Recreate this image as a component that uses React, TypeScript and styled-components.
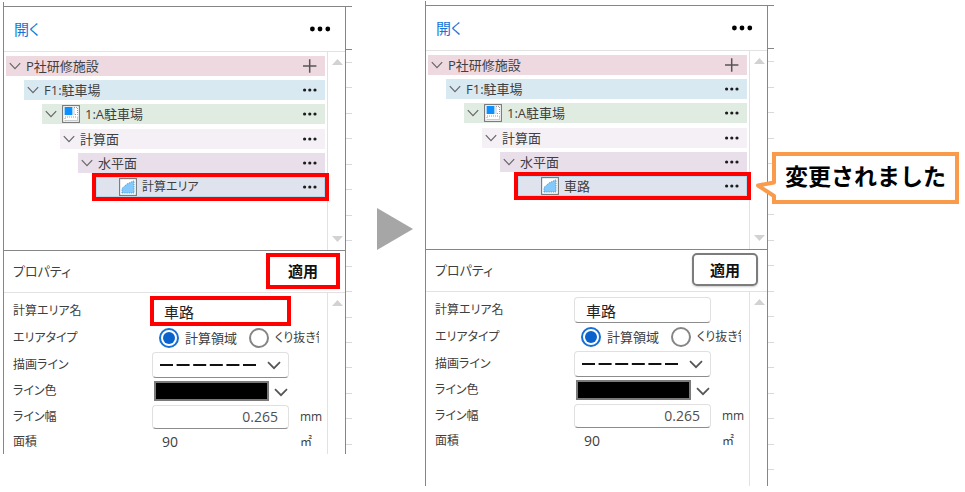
import React, { useId } from "react";
import styled, { createGlobalStyle, css } from "styled-components";

const line = "#868686";
const faint = "#e2e2e2";
const red = "#ff0000";
const orange = "#f99b4b";

const GlobalStyle = createGlobalStyle`
  *, *::before, *::after { box-sizing: border-box; }
  body {
    margin: 0;
    background: #fff;
    color: #404040;
    font: 13px/20px "Open Sans", "Noto Sans CJK JP", sans-serif;
    font-feature-settings: "palt";
  }
  button, input, select { font: inherit; font-feature-settings: inherit; color: inherit; }
  button { padding: 0; border: 0; background: none; cursor: pointer; }
  svg { display: block; flex: none; }
`;

const Page = styled.main`
  display: grid;
  grid-template-columns: minmax(0, 349fr) minmax(0, 73fr) minmax(0, 349fr) minmax(0, 188fr);
  align-items: start;
  padding: 1px 3px 4px;
`;

const Panel = styled.section<{ $low?: boolean; $tall?: boolean }>`
  display: flex;
  margin-top: ${(p) => (p.$low ? 1 : 0)}px;
  padding-top: 4px;
  border-left: 1px solid ${line};
  min-height: ${(p) => (p.$tall ? 485 : 0)}px;
`;

const PanelBody = styled.div`
  flex: 1;
  min-width: 0;
  display: flex;
  flex-direction: column;
  border-top: 1px solid ${line};
  border-right: 1px solid ${line};
`;

const Ruler = styled.div<{ $end: number }>`
  width: 6px;
  display: flex;
  flex-direction: column;
  justify-content: space-between;
  border-top: 1px solid ${line};
  padding-bottom: ${(p) => p.$end}px;
`;

const RulerHead = styled.div`
  height: 43px;
  margin-bottom: 12px;
  flex: none;
  border-bottom: 1px solid ${line};
`;

const Ticks = styled.div`
  flex: 1;
  display: flex;
  flex-direction: column;
  justify-content: space-between;
`;

const Tick = styled.span`
  height: 1px;
  background: #d9d9d9;
`;

const TopBar = styled.header`
  height: 45px;
  display: flex;
  align-items: center;
  justify-content: space-between;
  padding: 0 14px 0 10px;
  border-bottom: 1px solid ${faint};
`;

const OpenButton = styled.button`
  font-size: 15px;
  color: #1476d8;
`;

const Scroller = styled.div`
  display: flex;
  flex: none;
`;

const TreeArea = styled(Scroller)`
  height: 199px;
  border-bottom: 1px solid ${line};
`;

const ScrollTrack = styled.div`
  width: 18px;
  flex: none;
  display: flex;
  flex-direction: column;
  justify-content: space-between;
  align-items: center;
  padding: 7px 0 8px 1px;
  border-left: 1px solid ${faint};
`;

const Tree = styled.ul`
  position: relative;
  z-index: 1;
  flex: 1;
  min-width: 0;
  height: 141px;
  display: flex;
  flex-direction: column;
  justify-content: space-between;
  margin: 4px 2px 0;
  padding: 0;
  list-style: none;
`;

const TreeRow = styled.li<{ $level: number; $tone: string; $marked?: boolean }>`
  height: 20px;
  display: flex;
  align-items: center;
  gap: 5px;
  margin-left: ${(p) => p.$level * 18}px;
  padding: 0 7px 0 3px;
  background: ${(p) => p.$tone};
  ${(p) =>
    p.$marked &&
    css`
      padding-left: 23px;
      box-shadow: inset 0 0 0 1px #b4d8ec;
      outline: 4px solid ${red};
    `}
`;

const RowLabel = styled.span<{ $small?: boolean }>`
  flex: 1;
  font-size: ${(p) => (p.$small ? 12 : 13)}px;
  white-space: nowrap;
`;

const PropertyBar = styled.header`
  height: 42px;
  display: flex;
  align-items: center;
  justify-content: space-between;
  padding: 0 9px 2px;
  border-bottom: 1px solid ${faint};
`;

const PropertyTitle = styled.h2`
  margin: 0;
  font-size: 13px;
  font-weight: 400;
`;

const ApplyButton = styled.button<{ $marked?: boolean }>`
  width: 66px;
  height: 33px;
  border: 2px solid #7c7c7c;
  border-radius: 5px;
  box-shadow: 0 1px 2px #ccc;
  font-size: 15px;
  font-weight: 700;
  color: #111;
  ${(p) =>
    p.$marked &&
    css`
      height: 28px;
      border: 0;
      border-radius: 0;
      box-shadow: none;
      outline: 4px solid ${red};
    `}
`;

const PropertyArea = styled(Scroller)`
  flex: 1;
`;

const Form = styled.form`
  flex: 1;
  min-width: 0;
  padding: 5px 0 0 9px;
`;

const Field = styled.div<{ $height: number }>`
  height: ${(p) => p.$height}px;
  display: grid;
  grid-template-columns: minmax(0, 139fr) minmax(0, 137fr) minmax(0, 38fr);
  align-items: center;
  font-size: 12px;
`;

const Unit = styled.span`
  padding-left: 11px;
  white-space: nowrap;
`;

const boxed = css`
  width: 100%;
  height: 26px;
  border: 1px solid #e0e0e0;
  border-bottom-color: #8c8c8c;
  border-radius: 4px;
  background: #fff;
`;

const TextBox = styled.input<{ $marked?: boolean; $number?: boolean }>`
  ${boxed}
  height: ${(p) => (p.$number ? 24 : 26)}px;
  padding: 0 ${(p) => (p.$number ? 10 : 11)}px;
  font-size: ${(p) => (p.$number ? 14 : 15)}px;
  text-align: ${(p) => (p.$number ? "right" : "left")};
  color: ${(p) => (p.$number ? "#505050" : "#222")};
  ${(p) =>
    p.$marked &&
    css`
      border-color: #fff;
      border-radius: 0;
      outline: 4px solid ${red};
      outline-offset: -2px;
    `}
`;

const RadioGroup = styled.div`
  grid-column: 2 / 4;
  display: flex;
  align-items: center;
  gap: 12px;
  padding-left: 7px;
  margin-right: 8px;
  overflow: hidden;
`;

const RadioLabel = styled.label<{ $small?: boolean }>`
  display: flex;
  align-items: center;
  gap: 6px;
  font-size: ${(p) => (p.$small ? 12 : 13)}px;
  white-space: nowrap;
`;

const Radio = styled.input`
  appearance: none;
  flex: none;
  width: 20px;
  height: 20px;
  margin: 0;
  padding: 2px;
  border: 2px solid #858585;
  border-radius: 50%;
  &:checked {
    border-color: #1470d6;
    background: #0a63cc content-box;
  }
`;

const Picker = styled.div`
  position: relative;
  svg {
    position: absolute;
    pointer-events: none;
  }
`;

const LineSelect = styled.select`
  ${boxed}
  display: block;
  appearance: none;
`;

const DashSample = styled.svg`
  left: 8px;
  top: 12px;
`;

const PickerArrow = styled.svg`
  right: 8px;
  top: 9px;
`;

const ColorPicker = styled(Picker)`
  display: flex;
  padding: 0 20px 0 2px;
  ${PickerArrow} {
    right: 1px;
    top: 7px;
  }
`;

const ColorSelect = styled.select`
  appearance: none;
  width: 100%;
  height: 20px;
  border: 2px solid #7a7a7a;
  background: #000;
`;

const Reading = styled.output`
  padding-left: 10px;
  font-size: 14px;
`;

const ArrowCell = styled.div`
  padding: 207px 0 0 25px;
`;

const Callout = styled.aside`
  position: relative;
  margin: 151px 3px 0 -2px;
  height: 52px;
  display: flex;
  align-items: center;
  justify-content: center;
  border: 4px solid ${orange};
  background: #fff;
  font-size: 23px;
  font-weight: 700;
  line-height: 32px;
  color: #000;
  white-space: nowrap;
  font-feature-settings: normal;
  padding-bottom: 4px;
`;

const CalloutTail = styled.svg`
  position: absolute;
  left: -22px;
  top: 15px;
`;

const Chevron = () => (
  <svg width="12" height="12" viewBox="0 0 12 12" fill="none" stroke="#666" strokeWidth="1.2">
    <path d="M0.8 3.2 6 8.6 11.2 3.2" />
  </svg>
);

const SelectChevron = () => (
  <PickerArrow width="14" height="9" viewBox="0 0 14 9" fill="none" stroke="#555" strokeWidth="1.7">
    <path d="M1 1.2 7 7.2 13 1.2" />
  </PickerArrow>
);

const Dots = ({ large }: { large?: boolean }) =>
  large ? (
    <svg width="22" height="6" viewBox="0 0 22 6" fill="#000">
      <circle cx="3.4" cy="3" r="2.4" />
      <circle cx="11" cy="3" r="2.4" />
      <circle cx="18.8" cy="3" r="2.4" />
    </svg>
  ) : (
    <svg width="17" height="4" viewBox="0 0 17 4" fill="#1c1c1c">
      <circle cx="3.6" cy="2" r="1.6" />
      <circle cx="8.8" cy="2" r="1.6" />
      <circle cx="14" cy="2" r="1.6" />
    </svg>
  );

const Plus = () => (
  <svg width="17" height="14" viewBox="0 0 17 14" stroke="#555" strokeWidth="1.5">
    <path d="M8.7 0.3V13.7M2 7H15.4" />
  </svg>
);

const ScrollMark = ({ down }: { down?: boolean }) => (
  <svg width="11" height="6" viewBox="0 0 11 6" fill="#d2d2d2">
    <path d={down ? "M0 0H11L5.5 6Z" : "M0 6H11L5.5 0Z"} />
  </svg>
);

const RoomIcon = () => (
  <svg width="18" height="18" viewBox="0 0 18 18" fill="none">
    <rect x="0.6" y="0.6" width="16.8" height="16.8" fill="#fff" stroke="#777" strokeWidth="1.1" />
    <rect x="2.6" y="2" width="7.8" height="8" fill="#0a90ff" />
    <path d="M12 2.5H15.5V9.5H12ZM3 12H15.5V15.5H3Z" stroke="#999" strokeDasharray="1 1" />
  </svg>
);

const AreaIcon = () => (
  <svg width="18" height="18" viewBox="0 0 18 18">
    <rect x="0.6" y="0.6" width="16.8" height="16.8" fill="#fff" stroke="#777" strokeWidth="1.1" />
    <path
      d="M3 15V10.5L8 6 15 2.8V15Z"
      fill="#83c9fb"
      stroke="#4d9ccf"
      strokeWidth="1"
      strokeDasharray="1.2 1"
    />
  </svg>
);

interface Node {
  label: string;
  tone: string;
  icon?: React.ReactNode;
}

const branches: Node[] = [
  { label: "P社研修施設", tone: "#efd9e1" },
  { label: "F1:駐車場", tone: "#d9e9f2" },
  { label: "1:A駐車場", tone: "#e0ebe2", icon: <RoomIcon /> },
  { label: "計算面", tone: "#f4f0f6" },
  { label: "水平面", tone: "#e9dfeb" },
];

interface EditorProps {
  areaLabel: string;
  editing?: boolean;
  ticks: number;
  rulerEnd: number;
}

function Editor({ areaLabel, editing, ticks, rulerEnd }: EditorProps) {
  const id = useId();
  return (
    <Panel $low={editing} $tall={!editing}>
      <PanelBody>
        <TopBar>
          <OpenButton>開く</OpenButton>
          <button aria-label="メニュー">
            <Dots large />
          </button>
        </TopBar>
        <TreeArea>
          <Tree>
            {branches.map((node, level) => (
              <TreeRow key={node.label} $level={level} $tone={node.tone}>
                <Chevron />
                {node.icon}
                <RowLabel>{node.label}</RowLabel>
                <button aria-label={level === 0 ? "追加" : "メニュー"}>
                  {level === 0 ? <Plus /> : <Dots />}
                </button>
              </TreeRow>
            ))}
            <TreeRow $level={5} $tone="#dfe3ed" $marked>
              <AreaIcon />
              <RowLabel $small={editing}>{areaLabel}</RowLabel>
              <button aria-label="メニュー">
                <Dots />
              </button>
            </TreeRow>
          </Tree>
          <ScrollTrack>
            <ScrollMark />
            <ScrollMark down />
          </ScrollTrack>
        </TreeArea>
        <PropertyBar>
          <PropertyTitle>プロパティ</PropertyTitle>
          <ApplyButton $marked={editing}>適用</ApplyButton>
        </PropertyBar>
        <PropertyArea>
          <Form onSubmit={(e) => e.preventDefault()}>
            <Field $height={26}>
              <label htmlFor={`${id}name`}>計算エリア名</label>
              <TextBox id={`${id}name`} defaultValue="車路" $marked={editing} />
            </Field>
            <Field $height={27} role="radiogroup" aria-labelledby={`${id}type`}>
              <span id={`${id}type`}>エリアタイプ</span>
              <RadioGroup>
                <RadioLabel>
                  <Radio type="radio" name={`${id}kind`} defaultChecked />
                  計算領域
                </RadioLabel>
                <RadioLabel $small>
                  <Radio type="radio" name={`${id}kind`} />
                  くり抜き領域
                </RadioLabel>
              </RadioGroup>
            </Field>
            <Field $height={27}>
              <label htmlFor={`${id}line`}>描画ライン</label>
              <Picker>
                <LineSelect id={`${id}line`}>
                  <option value="dashed" aria-label="破線" />
                </LineSelect>
                <DashSample width="98" height="2" viewBox="0 0 98 2" stroke="#111" strokeWidth="2">
                  <path d="M0 1H98" strokeDasharray="13 3.6" />
                </DashSample>
                <SelectChevron />
              </Picker>
            </Field>
            <Field $height={26}>
              <label htmlFor={`${id}color`}>ライン色</label>
              <ColorPicker>
                <ColorSelect id={`${id}color`}>
                  <option value="#000000" aria-label="黒" />
                </ColorSelect>
                <SelectChevron />
              </ColorPicker>
            </Field>
            <Field $height={25}>
              <label htmlFor={`${id}width`}>ライン幅</label>
              <TextBox id={`${id}width`} defaultValue="0.265" inputMode="decimal" $number />
              <Unit>mm</Unit>
            </Field>
            <Field $height={25}>
              <label htmlFor={`${id}area`}>面積</label>
              <Reading id={`${id}area`}>90</Reading>
              <Unit>㎡</Unit>
            </Field>
          </Form>
          <ScrollTrack>
            <ScrollMark />
          </ScrollTrack>
        </PropertyArea>
      </PanelBody>
      <Ruler $end={rulerEnd}>
        <RulerHead />
        <Ticks>
          {Array.from({ length: ticks }, (_, i) => (
            <Tick key={i} />
          ))}
        </Ticks>
      </Ruler>
    </Panel>
  );
}

export default function App() {
  return (
    <>
      <GlobalStyle />
      <Page>
        <Editor areaLabel="計算エリア" editing ticks={16} rulerEnd={9} />
        <ArrowCell>
          <svg width="36" height="42" viewBox="0 0 36 42" fill="#a6a6a6">
            <path d="M0 0 36 21 0 42Z" />
          </svg>
        </ArrowCell>
        <Editor areaLabel="車路" ticks={17} rulerEnd={16} />
        <Callout>
          <CalloutTail width="24" height="32" viewBox="0 0 24 32">
            <path d="M17 9H24V25H17Z" fill="#fff" />
            <path
              d="M20 3V11.5L4 14.5 20 25V31"
              fill="#fff"
              stroke={orange}
              strokeWidth="4"
              strokeLinejoin="round"
            />
          </CalloutTail>
          変更されました
        </Callout>
      </Page>
    </>
  );
}
